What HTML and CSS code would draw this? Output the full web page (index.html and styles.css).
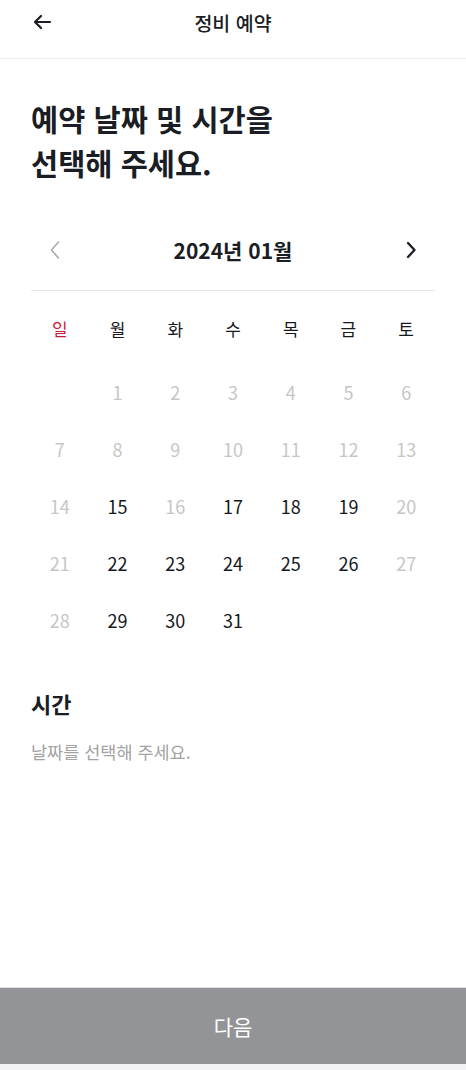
FILE: index.html
```html
<!DOCTYPE html>
<html lang="ko">
<head>
    <meta charset="UTF-8">
    <meta name="viewport" content="width=device-width, initial-scale=1.0">
    <title>정비 예약</title>
    <link rel="stylesheet" href="styles.css">
</head>
<body>
    <header class="topbar">
        <div class="topbar-side">
            <svg class="back-icon" width="20" height="20" viewBox="0 0 20 20">
                <path d="M18 10H3.5 M9 4L3 10l6 6" fill="none" stroke="#1a1d23" stroke-width="2.2" stroke-linecap="round" stroke-linejoin="round"/>
            </svg>
        </div>
        <div class="topbar-title">정비 예약</div>
        <div class="topbar-side"></div>
    </header>

    <main class="content">
        <h1 class="page-title">예약 날짜 및 시간을<br>선택해 주세요.</h1>

        <div class="month-nav">
            <div class="month-btn">
                <svg width="12" height="20" viewBox="0 0 12 20">
                    <path d="M9.5 2L2.5 10l7 8" fill="none" stroke="#ababab" stroke-width="1.6" stroke-linecap="round" stroke-linejoin="round"/>
                </svg>
            </div>
            <div class="month-label">2024년 01월</div>
            <div class="month-btn">
                <svg width="12" height="20" viewBox="0 0 12 20">
                    <path d="M3 3l6.5 7L3 17" fill="none" stroke="#1a1d23" stroke-width="2.3" stroke-linecap="round" stroke-linejoin="round"/>
                </svg>
            </div>
        </div>
        <div class="divider"></div>

        <div class="calendar weekdays">
            <div class="cell sun">일</div>
            <div class="cell">월</div>
            <div class="cell">화</div>
            <div class="cell">수</div>
            <div class="cell">목</div>
            <div class="cell">금</div>
            <div class="cell">토</div>
        </div>

        <div class="calendar days">
            <div class="cell"></div>
            <div class="cell off">1</div>
            <div class="cell off">2</div>
            <div class="cell off">3</div>
            <div class="cell off">4</div>
            <div class="cell off">5</div>
            <div class="cell off">6</div>

            <div class="cell off">7</div>
            <div class="cell off">8</div>
            <div class="cell off">9</div>
            <div class="cell off">10</div>
            <div class="cell off">11</div>
            <div class="cell off">12</div>
            <div class="cell off">13</div>

            <div class="cell off">14</div>
            <div class="cell">15</div>
            <div class="cell off">16</div>
            <div class="cell">17</div>
            <div class="cell">18</div>
            <div class="cell">19</div>
            <div class="cell off">20</div>

            <div class="cell off">21</div>
            <div class="cell">22</div>
            <div class="cell">23</div>
            <div class="cell">24</div>
            <div class="cell">25</div>
            <div class="cell">26</div>
            <div class="cell off">27</div>

            <div class="cell off">28</div>
            <div class="cell">29</div>
            <div class="cell">30</div>
            <div class="cell">31</div>
        </div>

        <h2 class="section-title">시간</h2>
        <p class="hint">날짜를 선택해 주세요.</p>
    </main>

    <footer class="bottom">
        <button class="next-btn">다음</button>
        <div class="bottom-strip"></div>
    </footer>
</body>
</html>
```

FILE: styles.css
```css
body {
    margin: 0;
    padding: 0;
    font-family: "Noto Sans CJK KR", "Noto Sans", sans-serif;
    background: #fff;
    color: #1a1d23;
    min-height: 100vh;
    display: flex;
    flex-direction: column;
}

/* 상단 바 */
.topbar {
    display: flex;
    align-items: center;
    height: 44px;
    padding-bottom: 14px;
    border-bottom: 1px solid #ececec;
}

.topbar-side {
    width: 80px;
    display: flex;
    align-items: center;
    padding-left: 32px;
    box-sizing: border-box;
}

.back-icon {
    display: block;
}

.topbar-title {
    flex: 1;
    text-align: center;
    font-size: 19.5px;
    font-weight: 500;
}

/* 본문 */
.content {
    flex: 1;
    padding: 0 31px;
}

.page-title {
    margin: 37px 0 0;
    font-size: 29.5px;
    line-height: 44px;
    font-weight: 700;
}

.month-nav {
    margin-top: 38px;
    height: 56px;
    display: flex;
    align-items: center;
    justify-content: space-between;
}

.month-btn {
    width: 48px;
    display: flex;
    justify-content: center;
}

.month-btn svg {
    display: block;
}

.month-label {
    font-size: 21px;
    font-weight: 700;
}

.divider {
    margin-top: 12px;
    height: 1px;
    background: #e6e6e6;
}

.calendar {
    display: grid;
    grid-template-columns: repeat(7, 1fr);
}

.weekdays {
    margin-top: 9px;
}

.days {
    margin-top: 6px;
}

.cell {
    height: 57px;
    display: flex;
    align-items: center;
    justify-content: center;
    font-size: 18px;
    color: #16181d;
}

.weekdays .cell {
    font-size: 17px;
}

.cell.sun {
    color: #c8193f;
}

.cell.off {
    color: #c6c6c6;
}

.section-title {
    margin: 40px 0 0;
    font-size: 22px;
    line-height: 30px;
    font-weight: 700;
}

.hint {
    margin: 22px 0 0;
    font-size: 17.5px;
    line-height: 24px;
    color: #a3a3a3;
}

/* 하단 버튼 */
.next-btn {
    display: block;
    width: 100%;
    height: 77px;
    border: none;
    border-top: 1px solid #e0e0e2;
    background: #939497;
    color: #fff;
    font-family: inherit;
    font-size: 21px;
    padding: 0;
}

.bottom-strip {
    height: 6px;
    background: #f3f3f5;
}
```
